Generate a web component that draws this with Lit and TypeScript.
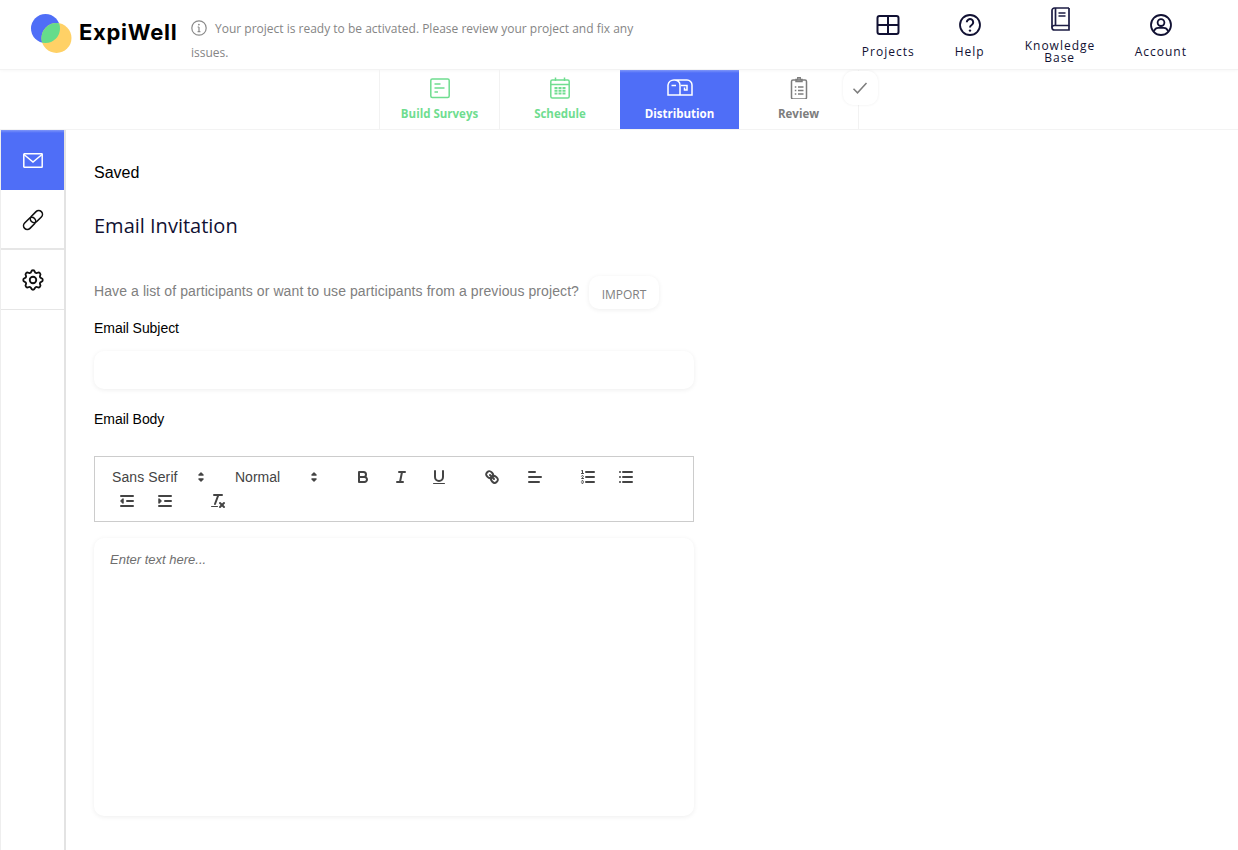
import { LitElement, html, css, svg } from "lit";
import { customElement } from "lit/decorators.js";

const ql = (inner: unknown) => html`<svg class="ql" viewBox="0 0 18 18" width="18" height="18">${inner}</svg>`;
const arrows = html`<svg class="ql" viewBox="0 0 18 18" width="18" height="18"><polygon class="f a" points="7 11 9 13 11 11 7 11"></polygon><polygon class="f a" points="7 7 9 5 11 7 7 7"></polygon></svg>`;

const icons = {
  bold: svg`<path d="M5,4H9.5A2.5,2.5,0,0,1,12,6.5v0A2.5,2.5,0,0,1,9.5,9H5A0,0,0,0,1,5,9V4A0,0,0,0,1,5,4Z"/><path d="M5,9h5.5A2.5,2.5,0,0,1,13,11.5v0A2.5,2.5,0,0,1,10.5,14H5a0,0,0,0,1,0,0V9A0,0,0,0,1,5,9Z"/>`,
  italic: svg`<line x1="7" x2="13" y1="4" y2="4"/><line x1="5" x2="11" y1="14" y2="14"/><line x1="8" x2="10" y1="14" y2="4"/>`,
  underline: svg`<path d="M5,3V9a4.012,4.012,0,0,0,4,4H9a4.012,4.012,0,0,0,4-4V3"/><rect class="f0" height="1" rx=".5" ry=".5" width="12" x="3" y="15"/>`,
  link: svg`<line x1="7" x2="11" y1="7" y2="11"/><path d="M8.9,4.577a3.476,3.476,0,0,1,.36,4.679A3.476,3.476,0,0,1,4.577,8.9C3.185,7.5,2.035,6.4,4.217,4.217S7.5,3.185,8.9,4.577Z"/><path d="M13.423,9.1a3.476,3.476,0,0,0-4.679-.36,3.476,3.476,0,0,0,.36,4.679c1.392,1.392,2.5,2.542,4.679.36S14.815,10.5,13.423,9.1Z"/>`,
  align: svg`<line x1="3" x2="15" y1="9" y2="9"/><line x1="3" x2="13" y1="14" y2="14"/><line x1="3" x2="9" y1="4" y2="4"/>`,
  ordered: svg`<line x1="7" x2="15" y1="4" y2="4"/><line x1="7" x2="15" y1="9" y2="9"/><line x1="7" x2="15" y1="14" y2="14"/><line class="s1" x1="2.5" x2="4.5" y1="5.5" y2="5.5"/><path class="f0" d="M3.5,6A0.5,0.5,0,0,1,3,5.5V3.085l-0.276.138A0.5,0.5,0,0,1,2.053,3c-0.124-.247-0.023-0.324.224-0.447l1-.5A0.5,0.5,0,0,1,4,2.5v3A0.5,0.5,0,0,1,3.5,6Z"/><path class="s1" d="M4.5,10.5h-2c0-.234,1.85-1.076,1.85-2.234A0.959,0.959,0,0,0,2.5,8.156"/><path class="s1" d="M2.5,14.846a0.959,0.959,0,0,0,1.85-.109A0.7,0.7,0,0,0,3.75,14a0.688,0.688,0,0,0,.6-0.736,0.959,0.959,0,0,0-1.85-.109"/>`,
  bullet: svg`<line x1="6" x2="15" y1="4" y2="4"/><line x1="6" x2="15" y1="9" y2="9"/><line x1="6" x2="15" y1="14" y2="14"/><line x1="3" x2="3" y1="4" y2="4"/><line x1="3" x2="3" y1="9" y2="9"/><line x1="3" x2="3" y1="14" y2="14"/>`,
  outdent: svg`<line x1="3" x2="15" y1="14" y2="14"/><line x1="3" x2="15" y1="4" y2="4"/><line x1="9" x2="15" y1="9" y2="9"/><polyline class="f a" points="5 7 5 11 3 9 5 7"/>`,
  indent: svg`<line x1="3" x2="15" y1="14" y2="14"/><line x1="3" x2="15" y1="4" y2="4"/><line x1="9" x2="15" y1="9" y2="9"/><polyline class="f a" points="3 7 3 11 5 9 3 7"/>`,
  clean: svg`<line x1="5" x2="13" y1="3" y2="3"/><line x1="6" x2="9.35" y1="12" y2="3"/><line x1="11" x2="15" y1="11" y2="15"/><line x1="15" x2="11" y1="11" y2="15"/><rect class="f0" height="1" rx=".5" ry=".5" width="7" x="2" y="14"/>`,
};

@customElement("app-root")
export class AppRoot extends LitElement {
  static styles = css`
    :host { display: block; width: 1238px; height: 850px; overflow: hidden; background: #fff; font-family: "Liberation Sans", Arial, sans-serif; color: #000; }
    * { box-sizing: border-box; }
    .header { height: 70px; display: flex; align-items: flex-start; border-bottom: 1px solid #f3f3f3; box-shadow: 0 1px 3px rgba(0,0,0,.03); position: relative; }
    .brand { display: flex; align-items: center; width: 191px; height: 62px; padding-left: 29px; flex: none; }
    .brand svg { flex: none; margin-top: 4px; margin-right: 7px; }
    .brand span { font-family: Inter, sans-serif; font-weight: 700; font-size: 22px; letter-spacing: .7px; color: #000; margin-top: 1px; margin-left: -1px; }
    .msg { width: 460px; margin-top: 17px; font-family: "Open Sans", sans-serif; font-size: 12px; line-height: 24px; color: #858585; flex: none; }
    .msg svg { vertical-align: -3px; margin-right: 8px; }
    .nav { margin-left: auto; display: flex; padding-right: 31px; }
    .nav-item { padding: 0 20px; display: flex; flex-direction: column; align-items: center; height: 69px; font-family: "Open Sans", sans-serif; font-size: 12px; letter-spacing: 1px; color: #111133; text-align: center; }
    .nav-item svg { margin-top: 13px; flex: none; }
    .nav-item .label { margin-top: 9px; line-height: 12px; }
    .nav-item.kb svg { margin-top: 7px; }
    .nav-item.kb .label { margin-top: 9px; width: 70px; }

    .tabs { height: 60px; padding-left: 379px; display: flex; border-bottom: 1px solid #f3f3f3; position: relative; }
    .tab { width: 120px; height: 59px; border-left: 1px solid #f2f2f2; display: flex; flex-direction: column; align-items: center; font-family: "Open Sans", sans-serif; font-weight: 700; font-size: 11.5px; color: #6fdd90; }
    .tab svg { margin-top: 7px; }
    .tab .label { margin-top: 6px; line-height: 18px; }
    .tab.wide { width: 121px; }
    .tab.active { width: 119px; background: linear-gradient(#7f96f9 0, #4f6ef7 3px); color: #fff; border-left: 0; }
    .tab.gray { color: #7d7d7d; border-left: 0; border-right: 1px solid #f2f2f2; }
    .check { position: absolute; left: 843px; top: 1px; width: 35px; height: 34px; padding-right: 2px; background: #fff; border-radius: 10px; box-shadow: 0 0 3px rgba(0,0,0,.07); display: flex; align-items: center; justify-content: center; }

    .body { display: flex; height: 720px; }
    .side { width: 66px; flex: none; border-left: 1px solid #eeeeee; border-right: 2px solid #e3e3e3; }
    .side-item { height: 60px; display: flex; align-items: center; justify-content: center; border-bottom: 2px solid #e6e6e6; }
    .side-item.active { background: linear-gradient(#7f96f9 0, #4f6ef7 3px); border-bottom: 0; }
    .side-item.mid { padding-top: 2px; }
    .side-item.last { border-bottom-width: 1px; }
    .main { padding: 34px 0 0 28px; width: 628px; }
    .saved { font-size: 16px; line-height: 18px; height: 18px; }
    h1 { margin: 30px 0 0; font-family: "Open Sans", sans-serif; font-weight: 400; font-size: 20px; line-height: 28px; color: #111133; }
    .import-row { margin-top: 36px; height: 33px; display: flex; align-items: center; gap: 10px; font-size: 14px; letter-spacing: .09px; color: #808080; }
    .import-row span { position: relative; top: -2px; }
    .btn { width: 70px; height: 33px; border-radius: 10px; background: #fff; box-shadow: 0 1px 5px rgba(0,0,0,.07); display: flex; align-items: center; justify-content: center; font-family: "Open Sans", sans-serif; font-size: 12px; letter-spacing: 0; color: #808080; padding-top: 3px; }
    .lab { font-size: 14px; line-height: 16px; height: 16px; letter-spacing: -.05px; }
    .lab.subject { margin-top: 11px; }
    .input { margin-top: 15px; height: 38px; width: 600px; border-radius: 10px; box-shadow: 0 1px 5px rgba(0,0,0,.07); background: #fff; }
    .lab.body-lab { margin-top: 22px; }
    .toolbar { margin-top: 29px; width: 600px; height: 66px; border: 1px solid #ccc; padding: 8px; }
    .row { display: flex; height: 24px; align-items: center; }
    .picker { display: flex; align-items: center; justify-content: space-between; height: 24px; font-size: 14px; color: #444; flex: none; }
    .picker.font { width: 108px; margin-right: 16px; padding-left: 9px; padding-right: 1px; letter-spacing: .1px; }
    .picker.size { width: 98px; margin-right: 24px; padding-left: 8px; padding-right: 2px; }
    .b { width: 28px; height: 24px; display: flex; align-items: center; justify-content: center; flex: none; margin-right: 10px; }
    .b.sep { margin-right: 25px; }
    .b.tight { margin-right: 15px; }
    .b.first { margin-left: 10px; }
    .ql { fill: none; stroke: #444; stroke-width: 2; stroke-linecap: round; stroke-linejoin: round; }
    .ql .s1 { stroke-width: 1; }
    .ql .a { stroke-width: 1.5; }
    .ql .f { fill: #444; }
    .ql .f0 { fill: #444; stroke: none; }
    .editor { margin-top: 16px; width: 600px; height: 278px; border-radius: 10px; box-shadow: 0 1px 5px rgba(0,0,0,.07); padding: 14px 16px; font-size: 13px; font-style: italic; color: #6e6e6e; line-height: 15px; background: #fff; }
  `;

  render() {
    return html`
      <div class="header">
        <div class="brand">
          <svg width="44" height="44" viewBox="29 11 44 44">
            <defs><clipPath id="lens"><circle cx="45.5" cy="28.5" r="14.5"></circle></clipPath></defs>
            <circle cx="45.5" cy="28.5" r="14.5" fill="#4f6ef7"></circle>
            <circle cx="56.5" cy="38" r="15" fill="#ffd166"></circle>
            <circle cx="56.5" cy="38" r="15" fill="#65dc8b" clip-path="url(#lens)"></circle>
          </svg>
          <span>ExpiWell</span>
        </div>
        <div class="msg">
          <svg width="16" height="16" viewBox="0 0 16 16" fill="none" stroke="#8a8a8a"><circle cx="8" cy="8" r="7.2" stroke-width="1.2"></circle><path d="M8 7v4.6M6.6 7h1.4M6.6 11.6h2.8" stroke-width="1.2"></path><circle cx="7.9" cy="4.6" r=".9" fill="#8a8a8a" stroke="none"></circle></svg>Your project is ready to be activated. Please review your project and fix any issues.
        </div>
        <div class="nav">
          <div class="nav-item">
            <svg width="24" height="24" viewBox="0 0 24 24" fill="none" stroke="#111133" stroke-width="2"><rect x="1.5" y="3" width="21" height="18" rx="2"></rect><path d="M12 3v18M1.5 12h21"></path></svg>
            <div class="label">Projects</div>
          </div>
          <div class="nav-item">
            <svg width="24" height="24" viewBox="0 0 24 24" fill="none" stroke="#111133" stroke-width="1.8"><circle cx="12" cy="12" r="10"></circle><path d="M8.8 9.3a3.2 3.2 0 1 1 4.9 2.7c-1.1.7-1.7 1.3-1.7 2.6" stroke-width="2"></path><circle cx="12" cy="17.6" r="1.2" fill="#111133" stroke="none"></circle></svg>
            <div class="label">Help</div>
          </div>
          <div class="nav-item kb">
            <svg width="22" height="24" viewBox="0 0 22 24" fill="none" stroke="#1c1c44" stroke-width="1.7"><path d="M20 1H5.5A2.5 2.5 0 0 0 3 3.5v17A2.5 2.5 0 0 0 5.5 23H20v-4.5"></path><path d="M6.5 1v17.5M3 20.5a2 2 0 0 1 2-2H20V1"></path><path d="M9.5 6h7M9.5 9h7" stroke-width="1.6"></path></svg>
            <div class="label">Knowledge Base</div>
          </div>
          <div class="nav-item">
            <svg width="24" height="24" viewBox="0 0 24 24" fill="none" stroke="#111133" stroke-width="1.8"><circle cx="12" cy="12" r="10"></circle><circle cx="12" cy="9.6" r="3.4"></circle><path d="M5 18.6c.6-2.6 2.6-3.8 4.4-3.8h5.2c1.8 0 3.8 1.2 4.4 3.8"></path></svg>
            <div class="label">Account</div>
          </div>
        </div>
      </div>

      <div class="tabs">
        <div class="tab">
          <svg width="22" height="22" viewBox="0 0 22 22" fill="none" stroke="#6fdd90" stroke-width="1.5"><rect x="1.8" y="2" width="18.4" height="18.4" rx="1.5"></rect><path d="M5.5 7h6M5.5 11h10M5.5 15h3.5"></path></svg>
          <div class="label">Build Surveys</div>
        </div>
        <div class="tab wide">
          <svg width="22" height="22" viewBox="0 0 22 22" fill="none" stroke="#6fdd90" stroke-width="1.5"><rect x="1.8" y="3" width="18.4" height="18" rx="1.5"></rect><path d="M1.8 7.5h18.4M6.5 .5v3.5M15.5 .5v3.5"></path><path d="M5.5 11h11M5.5 13.8h11M5.5 16.600h11" stroke-width="2" stroke-dasharray="3 1"></path></svg>
          <div class="label">Schedule</div>
        </div>
        <div class="tab active">
          <svg width="26" height="22" viewBox="0 0 26 22" fill="none" stroke="#fff" stroke-width="1.5"><path d="M7 3h13a5 5 0 0 1 5 5v10H1V8a6 6 0 0 1 6-5Zm6 15V8a5.500 5.500 0 0 0-5-5"></path><path d="M4.500 8.500H9M14 8.500h6v4.500h-2.500v-2.500" stroke-width="1.500"></path></svg>
          <div class="label">Distribution</div>
        </div>
        <div class="tab gray">
          <svg width="22" height="22" viewBox="0 0 22 22" fill="none" stroke="#7d7d7d" stroke-width="1.5"><rect x="3.500" y="3" width="15" height="19" rx="1.500"></rect><path d="M8 4.500V2.500h1.800V.8h2.400v1.700H14v2Z"></path><path d="M6.800 10h1.500M10 10h5.500M6.800 13.500h1.500M10 13.500h5.500M6.800 17h1.500M10 17h5.500"></path></svg>
          <div class="label">Review</div>
        </div>
        <div class="check">
          <svg width="16" height="14" viewBox="0 0 16 14" fill="none" stroke="#7d7d7d" stroke-width="1.500"><path d="M1.500 7.800 5.500 11.800 14.500 2"></path></svg>
        </div>
      </div>

      <div class="body">
        <div class="side">
          <div class="side-item active">
            <svg width="20" height="15" viewBox="0 0 20 15" fill="none" stroke="#fff" stroke-width="1.500"><rect x=".8" y=".8" width="18.400" height="13.400" rx=".5"></rect><path d="M1 1.500 10 9l9-7.500"></path></svg>
          </div>
          <div class="side-item mid">
            <svg width="22" height="22" viewBox="0 0 22 22" fill="none" stroke="#111" stroke-width="1.600"><rect x="10.650" y=".6" width="7.500" height="14" rx="3.750" transform="rotate(45 14.400 7.600)"></rect><rect x="3.850" y="7.400" width="7.500" height="14" rx="3.750" transform="rotate(45 7.600 14.400)"></rect></svg>
          </div>
          <div class="side-item last">
            <svg width="26" height="26" viewBox="0 0 24 24" fill="none" stroke="#111" stroke-width="1.700" stroke-linecap="round" stroke-linejoin="round"><path d="M10.325 4.317c.426-1.756 2.924-1.756 3.35 0a1.724 1.724 0 002.573 1.066c1.543-.94 3.31.826 2.37 2.37a1.724 1.724 0 001.065 2.572c1.756.426 1.756 2.924 0 3.35a1.724 1.724 0 00-1.066 2.573c.94 1.543-.826 3.31-2.37 2.37a1.724 1.724 0 00-2.572 1.065c-.426 1.756-2.924 1.756-3.35 0a1.724 1.724 0 00-2.573-1.066c-1.543.94-3.31-.826-2.37-2.37a1.724 1.724 0 00-1.065-2.572c-1.756-.426-1.756-2.924 0-3.35a1.724 1.724 0 001.066-2.573c-.94-1.543.826-3.31 2.37-2.37.996.608 2.296.07 2.572-1.065z"></path><circle cx="12" cy="12" r="3"></circle></svg>
          </div>
        </div>
        <div class="main">
          <div class="saved">Saved</div>
          <h1>Email Invitation</h1>
          <div class="import-row">
            <span>Have a list of participants or want to use participants from a previous project?</span>
            <div class="btn">IMPORT</div>
          </div>
          <div class="lab subject">Email Subject</div>
          <div class="input"></div>
          <div class="lab body-lab">Email Body</div>
          <div class="toolbar">
            <div class="row">
              <div class="picker font"><span>Sans Serif</span>${arrows}</div>
              <div class="picker size"><span>Normal</span>${arrows}</div>
              <div class="b">${ql(icons.bold)}</div>
              <div class="b">${ql(icons.italic)}</div>
              <div class="b sep">${ql(icons.underline)}</div>
              <div class="b tight">${ql(icons.link)}</div>
              <div class="b sep">${ql(icons.align)}</div>
              <div class="b">${ql(icons.ordered)}</div>
              <div class="b">${ql(icons.bullet)}</div>
            </div>
            <div class="row">
              <div class="b first">${ql(icons.outdent)}</div>
              <div class="b sep">${ql(icons.indent)}</div>
              <div class="b">${ql(icons.clean)}</div>
            </div>
          </div>
          <div class="editor">Enter text here...</div>
        </div>
      </div>
    `;
  }
}
